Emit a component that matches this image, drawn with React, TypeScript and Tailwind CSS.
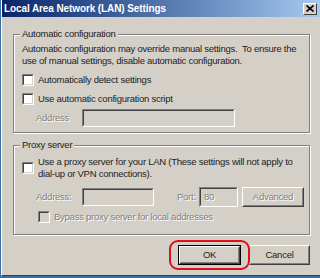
import React from 'react';

const font = { fontFamily: '"Liberation Sans", Arial, sans-serif' };

const Check = ({ disabled = false }: { disabled?: boolean }) => (
  <span
    className={`block w-[12px] h-[12px] shrink-0 border border-t-[#808080] border-l-[#808080] border-b-white border-r-white ${
      disabled ? 'bg-[#d4d0c8]' : 'bg-white'
    }`}
  >
    <span className="block w-full h-full border border-t-[#404040] border-l-[#404040] border-b-[#d4d0c8] border-r-[#d4d0c8]" />
  </span>
);

const Field = ({ className = '', value = '' }: { className?: string; value?: string }) => (
  <div
    className={`border border-t-[#808080] border-l-[#808080] border-b-white border-r-white bg-[#d4d0c8] ${className}`}
  >
    <div className="w-full h-full border border-t-[#404040] border-l-[#404040] border-b-[#d4d0c8] border-r-[#d4d0c8] text-[#808080] px-[3px] leading-[16px] [text-shadow:1px_1px_0_#fff]">
      {value}
    </div>
  </div>
);

const Dim = ({ children }: { children: React.ReactNode }) => (
  <span className="text-[#808080] [text-shadow:1px_1px_0_#fff]">{children}</span>
);

const Group = ({ title, className = '', children }: { title: string; className?: string; children: React.ReactNode }) => (
  <div className={`relative border border-[#808080] shadow-[1px_1px_0_#fff,inset_1px_1px_0_#fff] ${className}`}>
    <span className="absolute -top-[8px] left-[6px] bg-[#d4d0c8] px-[2px] leading-[14px]">{title}</span>
    {children}
  </div>
);

const Btn = ({ label, disabled = false, def = false, className = '' }: { label: string; disabled?: boolean; def?: boolean; className?: string }) => (
  <div className={`${def ? 'border border-black' : ''} ${className}`}>
    <div className="h-full border border-t-white border-l-white border-b-[#404040] border-r-[#404040]">
      <div className="h-full flex items-center justify-center border border-t-[#d4d0c8] border-l-[#d4d0c8] border-b-[#808080] border-r-[#808080]">
        {disabled ? <Dim>{label}</Dim> : <span className="text-[#222]">{label}</span>}
      </div>
    </div>
  </div>
);

export default function App() {
  return (
    <div className="w-[320px] h-[278px] bg-[#3a6ea5] overflow-hidden text-[9.5px] tracking-[-0.25px] whitespace-nowrap text-[#222]" style={font}>
      <div className="ml-[1px] w-[319px] h-[276px] bg-[#d4d0c8] border-l border-b border-l-white border-b-[#404040] flex flex-col">
        <div className="h-[17px] bg-gradient-to-r from-[#0a246a] to-[#a6caf0] flex items-center justify-between pl-[2px] pr-[3px]">
          <span className="text-white font-bold text-[10px] tracking-[-0.1px]">Local Area Network (LAN) Settings</span>
          <div className="w-[14px] h-[12px] bg-[#d4d0c8] border border-t-white border-l-white border-b-[#404040] border-r-[#404040] flex items-center justify-center">
            <svg width="8" height="7" viewBox="0 0 8 7">
              <path d="M0.5 0.5 L7.5 6.5 M7.5 0.5 L0.5 6.5" stroke="#000" strokeWidth="1.6" />
            </svg>
          </div>
        </div>

        <div className="flex-1 pl-[11px] pr-[10px] pt-[17px] flex flex-col">
          <Group title="Automatic configuration" className="h-[99px]">
            <div className="pl-[8px] pt-[8px] leading-[12px]">
              <p>Automatic configuration may override manual settings.&nbsp; To ensure the</p>
              <p>use of manual settings, disable automatic configuration.</p>
              <div className="flex items-center gap-[4px] mt-[7px]">
                <Check />
                <span>Automatically detect settings</span>
              </div>
              <div className="flex items-center gap-[4px] mt-[7px]">
                <Check />
                <span>Use automatic configuration script</span>
              </div>
              <div className="flex items-center mt-[4px] pl-[14px]">
                <span className="w-[46px]"><Dim>Address</Dim></span>
                <Field className="w-[153px] h-[18px]" />
              </div>
            </div>
          </Group>

          <Group title="Proxy server" className="h-[90px] mt-[12px]">
            <div className="pl-[8px] pt-[10px] leading-[12px]">
              <div className="flex items-center gap-[4px]">
                <Check />
                <div>
                  <p>Use a proxy server for your LAN (These settings will not apply to</p>
                  <p>dial-up or VPN connections).</p>
                </div>
              </div>
              <div className="flex items-center mt-[7px] pl-[14px]">
                <span className="w-[46px]"><Dim>Address:</Dim></span>
                <Field className="w-[72px] h-[18px]" />
                <span className="ml-[23px] w-[22px]"><Dim>Port:</Dim></span>
                <Field className="w-[39px] h-[20px]" value="80" />
                <Btn label="Advanced" disabled className="ml-[4px] w-[62px] h-[20px]" />
              </div>
              <div className="flex items-center gap-[4px] mt-[4px] pl-[16px]">
                <Check disabled />
                <Dim>Bypass proxy server for local addresses</Dim>
              </div>
            </div>
          </Group>

          <div className="flex justify-end gap-[8px] mt-[10px]">
            <div className="relative">
              <Btn label="OK" def className="w-[63px] h-[20px]" />
              <div className="absolute -left-[9px] -top-[5px] w-[81px] h-[30px] rounded-[9px] border-[2px] border-[#e0101a]" />
            </div>
            <Btn label="Cancel" className="w-[61px] h-[20px]" />
          </div>
        </div>
      </div>
    </div>
  );
}
